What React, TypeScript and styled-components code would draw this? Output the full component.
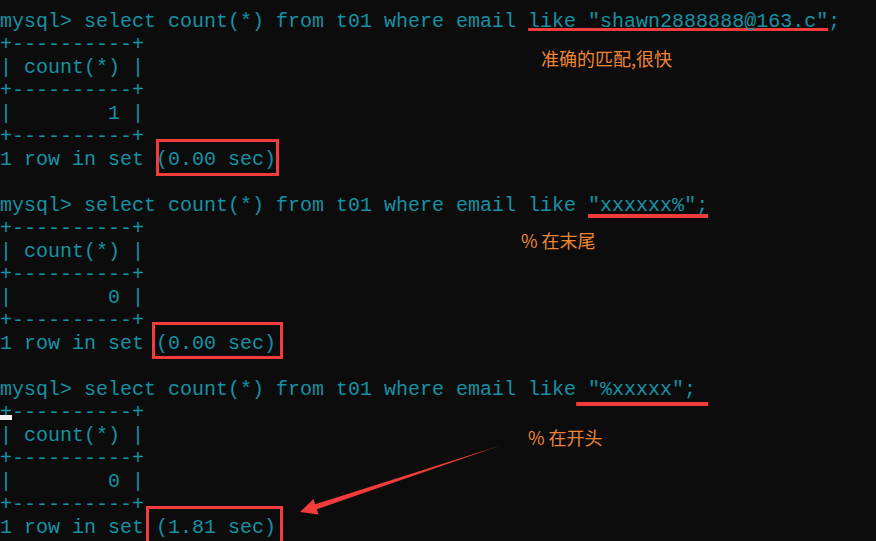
import React from "react";
import styled, { createGlobalStyle } from "styled-components";

const Global = createGlobalStyle`
  html, body {
    margin: 0;
    padding: 0;
    background: #0c0c0c;
  }
  body {
    width: 876px;
    height: 541px;
    overflow: hidden;
  }
`;

const Screen = styled.div`
  position: relative;
  width: 876px;
  height: 541px;
  background: #0c0c0c;
  overflow: hidden;
`;

const Console = styled.div`
  display: flex;
  flex-direction: column;
  padding-top: 10px;
  font-family: "Liberation Mono", "DejaVu Sans Mono", monospace;
  font-size: 20px;
  color: #1592a4;
`;

const Line = styled.div`
  height: 23px;
  line-height: 23px;
  white-space: pre;
`;

const Marked = styled.span<{ $offset: number; $thick: number }>`
  text-decoration-line: underline;
  text-decoration-color: #f23b3b;
  text-decoration-thickness: ${(p) => p.$thick}px;
  text-underline-offset: ${(p) => p.$offset}px;
  text-decoration-skip-ink: none;
`;

const Box = styled.div<{ $x: number; $y: number; $w: number; $h: number }>`
  position: absolute;
  left: ${(p) => p.$x}px;
  top: ${(p) => p.$y}px;
  width: ${(p) => p.$w}px;
  height: ${(p) => p.$h}px;
  border: 3px solid #f23b3b;
  box-sizing: border-box;
`;

const Note = styled.div<{ $x: number; $y: number }>`
  position: absolute;
  left: ${(p) => p.$x}px;
  top: ${(p) => p.$y}px;
  font-family: "Noto Sans CJK SC", "Noto Sans", sans-serif;
  font-size: 18px;
  line-height: 22px;
  color: #ef8534;
  white-space: pre;
`;

const Cursor = styled.div`
  position: absolute;
  left: 0;
  top: 415px;
  width: 12px;
  height: 5px;
  background: #f2f2f2;
`;

const ArrowSvg = styled.svg`
  position: absolute;
  left: 0;
  top: 0;
  pointer-events: none;
`;

type Block = {
  head: string;
  mark: string;
  tail: string;
  offset: number;
  thick: number;
  value: string;
  time: string;
};

const blocks: Block[] = [
  {
    head: "mysql> select count(*) from t01 where email ",
    mark: 'like "shawn2888888@163.c"',
    tail: ";",
    offset: 1,
    thick: 3,
    value: "1",
    time: "0.00",
  },
  {
    head: "mysql> select count(*) from t01 where email like ",
    mark: '"xxxxxx%";',
    tail: "",
    offset: 3,
    thick: 4,
    value: "0",
    time: "0.00",
  },
  {
    head: "mysql> select count(*) from t01 where email like",
    mark: ' "%xxxxx"; ',
    tail: "",
    offset: 7,
    thick: 4,
    value: "0",
    time: "1.81",
  },
];

function QueryBlock({ b, last }: { b: Block; last: boolean }) {
  return (
    <>
      <Line>
        {b.head}
        <Marked $offset={b.offset} $thick={b.thick}>
          {b.mark}
        </Marked>
        {b.tail}
      </Line>
      <Line>+----------+</Line>
      <Line>| count(*) |</Line>
      <Line>+----------+</Line>
      <Line>{`|        ${b.value} |`}</Line>
      <Line>+----------+</Line>
      <Line>{`1 row in set (${b.time} sec)`}</Line>
      {!last && <Line> </Line>}
    </>
  );
}

export default function App() {
  return (
    <>
      <Global />
      <Screen>
        <Console>
          {blocks.map((b, i) => (
            <QueryBlock key={i} b={b} last={i === blocks.length - 1} />
          ))}
        </Console>

        <Box $x={156} $y={139} $w={123} $h={37} />
        <Box $x={152} $y={322} $w={131} $h={37} />
        <Box $x={146} $y={506} $w={137} $h={40} />

        <Note $x={541} $y={47}>准确的匹配,很快</Note>
        <Note $x={521} $y={229}>% 在末尾</Note>
        <Note $x={528} $y={426}>% 在开头</Note>

        <Cursor />

        <ArrowSvg width={876} height={541} viewBox="0 0 876 541">
          <defs>
            <linearGradient id="shaft" x1="502" y1="445" x2="300" y2="512" gradientUnits="userSpaceOnUse">
              <stop offset="0" stopColor="#8a2020" />
              <stop offset="0.12" stopColor="#f23b3b" />
              <stop offset="1" stopColor="#f23b3b" />
            </linearGradient>
          </defs>
          <polygon
            points="300,512 318.5,514.5 316.8,509.2 502,445 315.2,504.2 313.5,499"
            fill="url(#shaft)"
          />
        </ArrowSvg>
      </Screen>
    </>
  );
}
